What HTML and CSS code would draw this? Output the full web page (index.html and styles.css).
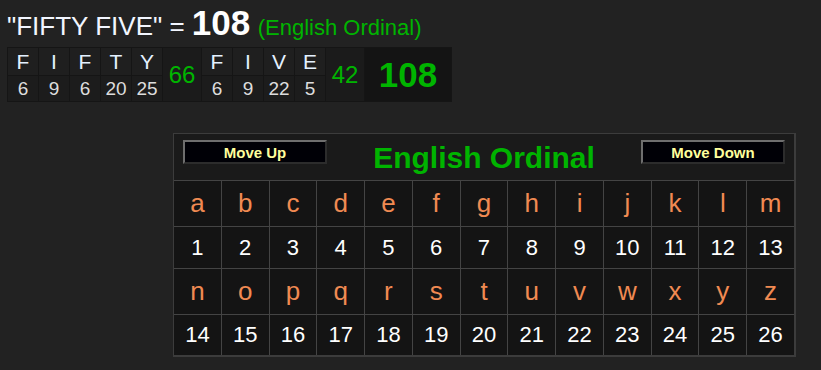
FILE: index.html
```html
<!DOCTYPE html>
<html lang="en">
<head>
    <meta charset="UTF-8">
    <meta name="viewport" content="width=device-width, initial-scale=1.0">
    <title>FIFTY FIVE - English Ordinal</title>
    <link rel="stylesheet" href="styles.css">
</head>
<body>
    <div class="page">
        <div class="headline">
            <span class="phrase">"FIFTY FIVE" = </span><span class="value">108</span>
            <span class="cipher-name">(English Ordinal)</span>
        </div>

        <!-- letter by letter breakdown, one column per letter -->
        <div class="breakdown">
            <span class="bd-letter">F</span><span class="bd-num">6</span>
            <span class="bd-letter">I</span><span class="bd-num">9</span>
            <span class="bd-letter">F</span><span class="bd-num">6</span>
            <span class="bd-letter">T</span><span class="bd-num">20</span>
            <span class="bd-letter">Y</span><span class="bd-num">25</span>
            <span class="bd-word">66</span>
            <span class="bd-letter">F</span><span class="bd-num">6</span>
            <span class="bd-letter">I</span><span class="bd-num">9</span>
            <span class="bd-letter">V</span><span class="bd-num">22</span>
            <span class="bd-letter">E</span><span class="bd-num">5</span>
            <span class="bd-word">42</span>
            <span class="bd-total">108</span>
        </div>

        <div class="chart">
            <div class="chart-head">
                <button class="move-btn">Move Up</button>
                <span class="chart-title">English Ordinal</span>
                <button class="move-btn">Move Down</button>
            </div>

            <span class="ch">a</span><span class="ch">b</span><span class="ch">c</span><span class="ch">d</span><span class="ch">e</span><span class="ch">f</span><span class="ch">g</span><span class="ch">h</span><span class="ch">i</span><span class="ch">j</span><span class="ch">k</span><span class="ch">l</span><span class="ch">m</span>
            <span class="val">1</span><span class="val">2</span><span class="val">3</span><span class="val">4</span><span class="val">5</span><span class="val">6</span><span class="val">7</span><span class="val">8</span><span class="val">9</span><span class="val">10</span><span class="val">11</span><span class="val">12</span><span class="val">13</span>
            <span class="ch">n</span><span class="ch">o</span><span class="ch">p</span><span class="ch">q</span><span class="ch">r</span><span class="ch">s</span><span class="ch">t</span><span class="ch">u</span><span class="ch">v</span><span class="ch">w</span><span class="ch">x</span><span class="ch">y</span><span class="ch">z</span>
            <span class="val">14</span><span class="val">15</span><span class="val">16</span><span class="val">17</span><span class="val">18</span><span class="val">19</span><span class="val">20</span><span class="val">21</span><span class="val">22</span><span class="val">23</span><span class="val">24</span><span class="val">25</span><span class="val">26</span>
        </div>
    </div>
</body>
</html>
```

FILE: styles.css
```css
:root {
    --bg-page: #222222;
    --bg-cell: #141414;
    --line: #444444;
    --green: #00b400;
    --orange: #f08a52;
}

* {
    margin: 0;
    padding: 0;
    box-sizing: border-box;
}

body {
    background-color: var(--bg-page);
    color: #ffffff;
    font-family: "Liberation Sans", Arial, sans-serif;
}

.page {
    padding: 6px 0 0 7px;
}

.headline {
    height: 34px;
    line-height: 34px;
    white-space: nowrap;
}

.phrase {
    font-size: 26px;
    color: #f2f6ff;
}

.value {
    font-size: 35px;
    font-weight: bold;
}

.cipher-name {
    margin-left: 3px;
    font-size: 22px;
    color: var(--green);
}

/* breakdown grid: letters on top, values below, word sums span both rows */
.breakdown {
    display: inline-grid;
    grid-template-rows: 27px 25px;
    grid-template-columns: repeat(5, 30px) 38px repeat(4, 30px) 38px 86px;
    grid-auto-flow: column;
    gap: 1px;
    padding: 1px;
    margin-top: 7px;
    background-color: #151515;
}

.bd-letter,
.bd-num,
.bd-word,
.bd-total {
    display: flex;
    align-items: center;
    justify-content: center;
}

.bd-letter {
    background-color: #1f1f1f;
    color: #e4f1ff;
    font-size: 21px;
}

.bd-num {
    background-color: #1c1c1c;
    color: #dddddd;
    font-size: 19px;
}

.bd-word {
    grid-row: span 2;
    background-color: #1b1b1b;
    color: var(--green);
    font-size: 24px;
}

.bd-total {
    grid-row: span 2;
    background-color: #141414;
    color: var(--green);
    font-size: 35px;
    font-weight: bold;
}

/* cipher chart */
.chart {
    display: grid;
    grid-template-columns: repeat(13, 1fr);
    grid-template-rows: 46px 45px 41px 45px 40px;
    gap: 1px;
    width: 623px;
    margin: 31px 0 0 166px;
    background-color: var(--line);
    border-style: solid;
    border-color: #3c3c3c;
    border-width: 1px 2px 2px 1px;
}

.chart-head {
    grid-column: 1 / -1;
    display: flex;
    justify-content: space-between;
    align-items: flex-start;
    padding: 6px 9px 0 9px;
    background-color: #1a1a1a;
}

.chart-title {
    align-self: center;
    margin-top: -4px;
    color: var(--green);
    font-size: 30px;
    font-weight: bold;
}

.move-btn {
    width: 144px;
    height: 24px;
    background-color: #000006;
    color: #ffff9c;
    font-family: "Liberation Sans", Arial, sans-serif;
    font-size: 15px;
    font-weight: bold;
    border-style: solid;
    border-width: 2px;
    border-color: #6e6e6e #2c2c2c #2c2c2c #6e6e6e;
}

.ch,
.val {
    display: flex;
    align-items: center;
    justify-content: center;
    background-color: var(--bg-cell);
}

.ch {
    color: var(--orange);
    font-size: 26px;
}

.val {
    color: #ffffff;
    font-size: 22px;
}
```
